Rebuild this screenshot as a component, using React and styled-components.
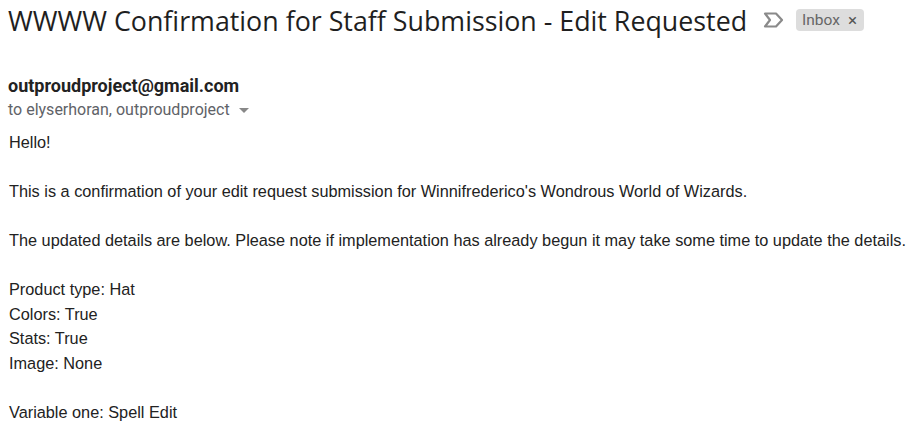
import styled, {createGlobalStyle} from 'styled-components';

const Global = createGlobalStyle`
  body {
    margin: 0;
    background: #fff;
  }
`;

const Page = styled.div`
  padding: 3px 9px 0 8px;
`;

const SubjectRow = styled.div`
  display: flex;
  align-items: center;
  height: 34px;
`;
const Subject = styled.h2`
  margin: 0;
  font-family: "Open Sans", sans-serif;
  font-weight: 400;
  font-size: 26.8px;
  color: #1f1f1f;
  white-space: nowrap;
`;
const LabelIcon = styled.svg`
  margin-left: 15px;
  width: 22px;
  height: 22px;
`;
const Chip = styled.span`
  margin-left: 12px;
  display: inline-flex;
  align-items: center;
  gap: 8px;
  background: #dddddd;
  color: #666;
  border-radius: 4px;
  padding: 2px 7px 2px 6px;
  font-family: Roboto, sans-serif;
  font-size: 15.5px;
  line-height: 18px;
`;
const Close = styled.span`
  font-size: 17px;
  color: #555;
`;

const Sender = styled.div`
  margin-top: 38px;
  font-family: Roboto, sans-serif;
  font-weight: 700;
  font-size: 18px;
  color: #222;
  line-height: 22px;
`;
const Recipients = styled.div`
  display: flex;
  align-items: center;
  margin-top: 3px;
  font-family: Roboto, sans-serif;
  font-size: 16px;
  color: #5f6368;
  line-height: 20px;
`;
const Caret = styled.span`
  margin-left: 9px;
  width: 0;
  height: 0;
  border-left: 5px solid transparent;
  border-right: 5px solid transparent;
  border-top: 5px solid #888;
`;

const Body = styled.div`
  margin-top: 10px;
  padding-left: 1px;
  font-family: "Liberation Sans", Arial, sans-serif;
  font-size: 16.3px;
  line-height: 24.5px;
  color: #222;
`;
const Line = styled.div`
  min-height: 24.5px;
  white-space: nowrap;
`;

const lines = [
  'Hello!',
  '',
  "This is a confirmation of your edit request submission for Winnifrederico's Wondrous World of Wizards.",
  '',
  'The updated details are below. Please note if implementation has already begun it may take some time to update the details.',
  '',
  'Product type: Hat',
  'Colors: True',
  'Stats: True',
  'Image: None',
  '',
  'Variable one: Spell Edit',
];

export default function App() {
  return (
    <Page>
      <Global />
      <SubjectRow>
        <Subject>WWWW Confirmation for Staff Submission - Edit Requested</Subject>
        <LabelIcon viewBox="0 0 22 22">
          <path d="M3 4.5h11l6 6.5-6 6.5H3l5-6.5z" fill="none" stroke="#8a8a8a" strokeWidth="2.2" strokeLinejoin="round" />
        </LabelIcon>
        <Chip>Inbox<Close>×</Close></Chip>
      </SubjectRow>
      <Sender>outproudproject@gmail.com</Sender>
      <Recipients>to elyserhoran, outproudproject<Caret /></Recipients>
      <Body>
        {lines.map((l, i) => <Line key={i}>{l}</Line>)}
      </Body>
    </Page>
  );
}
